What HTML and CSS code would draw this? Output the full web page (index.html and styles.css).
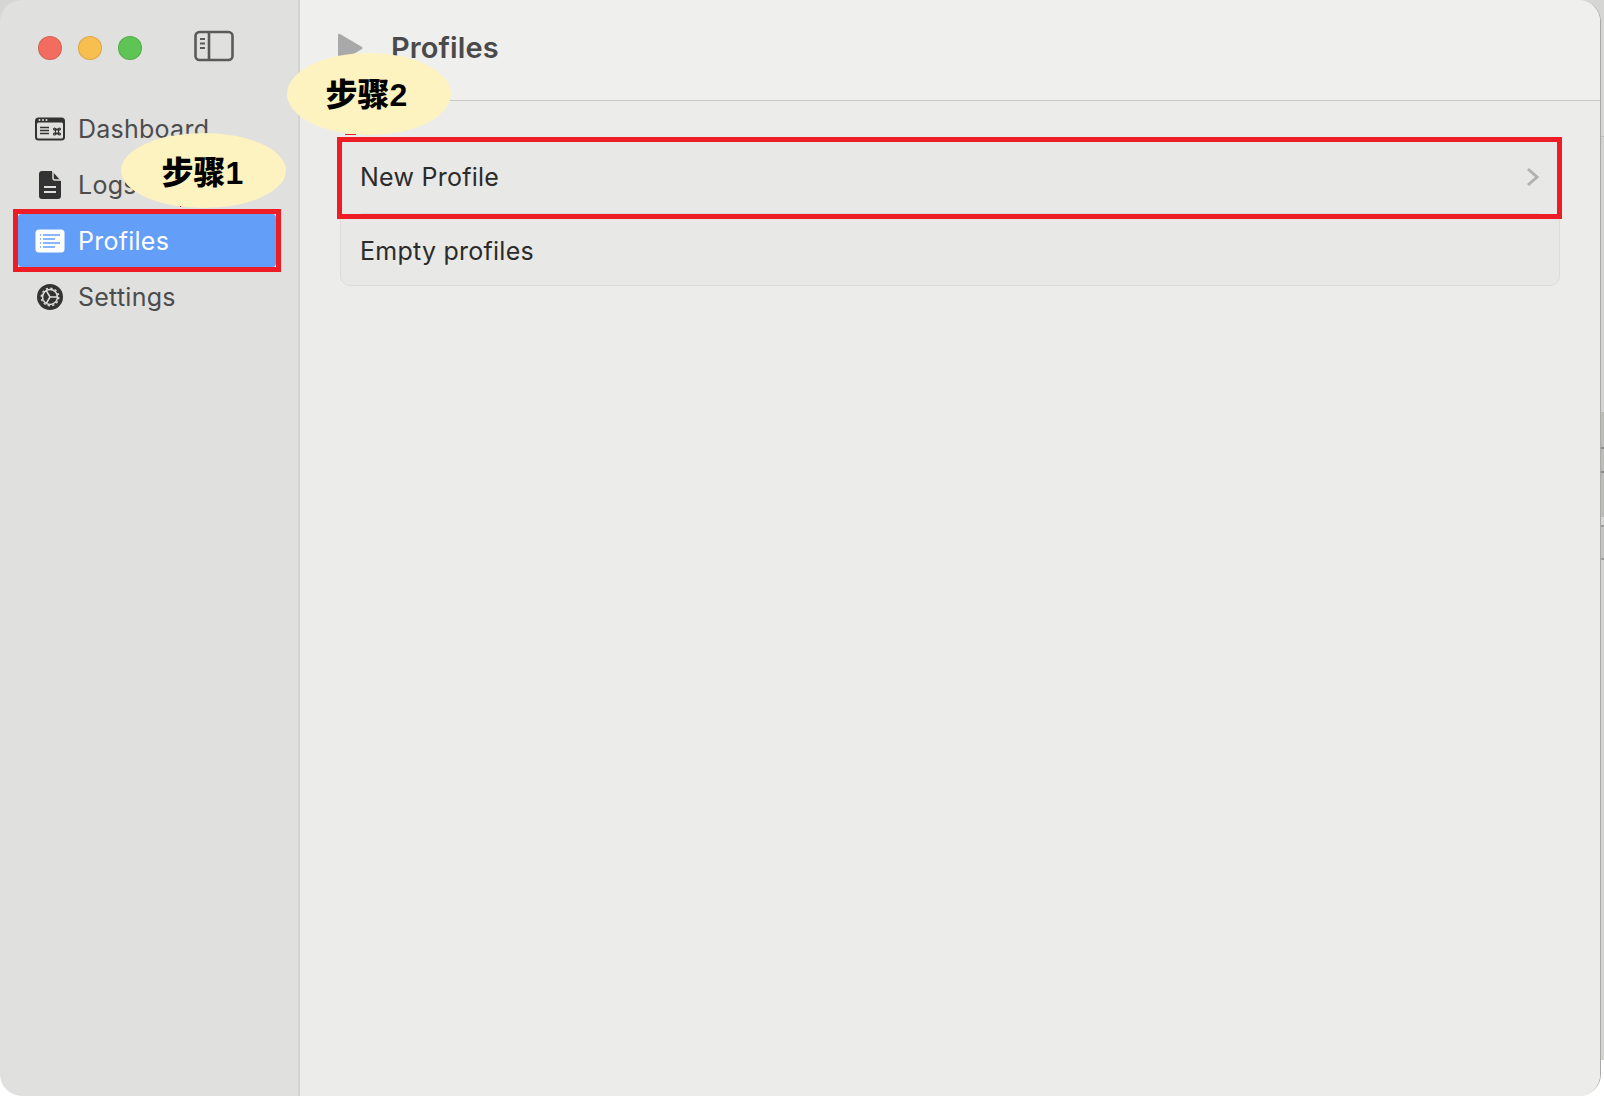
FILE: index.html
```html
<!DOCTYPE html>
<html lang="en">
<head>
    <meta charset="UTF-8">
    <meta name="viewport" content="width=device-width, initial-scale=1.0">
    <title>Profiles</title>
    <link rel="stylesheet" href="styles.css">
</head>
<body>
    <div class="window">
        <aside class="sidebar">
            <div class="titlebar">
                <div class="lights">
                    <span class="light red"></span>
                    <span class="light yellow"></span>
                    <span class="light green"></span>
                </div>
                <svg class="toggle" width="40" height="32" viewBox="0 0 40 32" fill="none" stroke="#5a5a5a">
                    <rect x="1.500" y="2" width="37" height="28" rx="4" stroke-width="2.600"/>
                    <path d="M15 2v28" stroke-width="2.600"/>
                    <path d="M6 9h5M6 13.500h5M6 18h5" stroke-width="2"/>
                </svg>
            </div>
            <nav class="nav">
                <a class="nav-item">
                    <svg width="30" height="24" viewBox="0 0 30 24">
                        <rect x="0" y="0.500" width="30" height="23" rx="3.500" fill="#333"/>
                        <rect x="2" y="5.500" width="26" height="16" rx="1.500" fill="#e0e0de"/>
                        <circle cx="4.500" cy="3" r="1" fill="#e0e0de"/>
                        <circle cx="8" cy="3" r="1" fill="#e0e0de"/>
                        <circle cx="11.500" cy="3" r="1" fill="#e0e0de"/>
                        <path d="M5 10.500h9M5 13.500h9M5 16.500h9" stroke="#333" stroke-width="1.500"/>
                        <g fill="none" stroke="#333" stroke-width="1.100">
                            <path d="M20.500 12h3v5h-3zM19.500 13h5M19.500 16h5"/>
                            <circle cx="19.500" cy="12" r="1"/>
                            <circle cx="24.500" cy="12" r="1"/>
                            <circle cx="19.500" cy="17" r="1"/>
                            <circle cx="24.500" cy="17" r="1"/>
                        </g>
                    </svg>
                    Dashboard
                </a>
                <a class="nav-item">
                    <svg width="30" height="30" viewBox="0 0 30 30">
                        <path d="M7 1h10l9 10v15a3 3 0 0 1-3 3H7a3 3 0 0 1-3-3V4a3 3 0 0 1 3-3z" fill="#333"/>
                        <path d="M18 1v7a2 2 0 0 0 2 2h6" fill="none" stroke="#e0e0de" stroke-width="1.500"/>
                        <path d="M9 17h12M9 22h12" stroke="#e0e0de" stroke-width="2"/>
                    </svg>
                    Logs
                </a>
                <a class="nav-item active">
                    <svg width="30" height="24" viewBox="0 0 30 24">
                        <rect x="0.500" y="0.500" width="29" height="23" rx="3.500" fill="#fff"/>
                        <path d="M8 6h17M8 10h12M8 14h17M8 18h12" stroke="#639ef8" stroke-width="1.500"/>
                        <path d="M5 6h1M5 10h1M5 14h1M5 18h1" stroke="#639ef8" stroke-width="1.700"/>
                    </svg>
                    Profiles
                </a>
                <a class="nav-item">
                    <svg width="30" height="30" viewBox="0 0 30 30">
                        <circle cx="15" cy="15" r="13" fill="#333"/>
                        <circle cx="15" cy="15" r="7.500" fill="none" stroke="#e0e0de" stroke-width="1.500"/>
                        <circle cx="15" cy="15" r="8.800" fill="none" stroke="#e0e0de" stroke-width="1.300" stroke-dasharray="2.300 2.310"/>
                        <path d="M15 15l-3.700-6.300M15 15l-3.700 6.300M15 15h7.500" stroke="#e0e0de" stroke-width="1.500"/>
                    </svg>
                    Settings
                </a>
            </nav>
        </aside>
        <main class="main">
            <header class="header">
                <svg width="28" height="30" viewBox="0 0 28 28" preserveAspectRatio="none">
                    <path d="M2 2q0-2 2-1l22 12q1 1 0 2L4 27q-2 1-2-1z" fill="#a9a9a9"/>
                </svg>
                <h1>Profiles</h1>
            </header>
            <section class="card">
                <div class="row first">
                    New Profile
                    <svg width="14" height="20" viewBox="0 0 14 20" fill="none" stroke="#b1b1b0" stroke-width="3">
                        <path d="M2 2l9 8-9 8"/>
                    </svg>
                </div>
                <div class="sep"></div>
                <div class="row">Empty profiles</div>
            </section>
        </main>
    </div>

    <!-- annotations pasted on top of the screenshot -->
    <div class="mark mark-nav"></div>
    <div class="mark mark-row"></div>
    <div class="bubble bubble-one">步骤1</div>
    <div class="bubble bubble-two">步骤2</div>
    <span class="tick tick-row"></span>
    <span class="tick tick-nav"></span>
</body>
</html>
```
FILE: styles.css
```css
* { box-sizing: border-box; }
html, body { height: 100%; }
body {
    margin: 0;
    overflow: hidden;
    position: relative;
    font-family: Inter, "Noto Sans", sans-serif;
    /* bit of the window behind, only shows in the right strip */
    background: linear-gradient(
        #d6d6d4 0 136px, #bdbdbb 136px 137px, #d2d2d0 137px 412px,
        #bcbcb8 412px 447px, #8c8c8a 447px 449px, #bcbcb8 449px 471px,
        #8c8c8a 471px 473px, #bcbcb8 473px 517px, #d6d6d4 517px 525px,
        #9c9c9a 525px 527px, #c4c4c2 527px 558px, #9c9c9a 558px 560px,
        #d2d2d0 560px 1060px, #fff 1060px);
}

.window {
    width: 1601px;
    height: 1096px;
    display: flex;
    border-radius: 22px;
    border-right: 1px solid #a9a9a8;
    overflow: hidden;
}

.sidebar {
    width: 300px;
    flex: none;
    background: #e0e0de;
    border-right: 2px solid #d3d3d1;
}
.titlebar {
    height: 102px;
    padding: 30px 0 0 38px;
    display: flex;
    align-items: flex-start;
}
.lights { display: flex; gap: 16px; padding-top: 6px; }
.light { width: 24px; height: 24px; border-radius: 50%; border: 1px solid rgba(0,0,0,.12); }
.red { background: #f26d60; }
.yellow { background: #f7bf4f; }
.green { background: #5ec454; }
.toggle { margin-left: 52px; }

.nav { padding: 0 22px 0 18px; display: flex; flex-direction: column; gap: 3px; }
.nav-item {
    height: 53px;
    padding-left: 17px;
    display: flex;
    align-items: center;
    gap: 13px;
    font-size: 25px;
    letter-spacing: .25px;
    color: #4c4c4c;
    border-radius: 4px;
}
.nav-item svg { flex: none; }
.nav-item.active { background: #639ef8; color: #fff; }

.main { flex: 1; background: #ecECea; }
.header {
    height: 101px;
    padding: 0 0 5px 36px;
    display: flex;
    align-items: center;
    gap: 27px;
    background: #efefed;
    border-bottom: 1px solid #c8c8c6;
}
.header h1 { margin: 0; font-size: 29px; font-weight: 600; letter-spacing: .1px; color: #4a4a4a; }

.card {
    margin: 37px 40px 0 40px;
    height: 148px;
    background: #e8e8e6;
    border: 1px solid #dcdcda;
    border-radius: 10px;
}
.row {
    height: 73px;
    padding: 0 19px;
    display: flex;
    align-items: center;
    justify-content: space-between;
    font-size: 25px;
    letter-spacing: .25px;
    color: #2b2b2b;
}
.row.first { height: 74px; padding-top: 2px; }
.sep { height: 1px; margin: 0 20px; background: #dadad8; }

.mark { position: absolute; border: 5px solid #ee1c25; }
.mark-nav { left: 13px; top: 209px; width: 268px; height: 63px; }
.mark-row { left: 337px; top: 137px; width: 1225px; height: 82px; }

.bubble {
    position: absolute;
    display: flex;
    align-items: center;
    justify-content: center;
    border-radius: 50%;
    background: #fdf3c0;
    color: #000;
    font-family: "Liberation Sans", "Noto Sans CJK SC", sans-serif;
    font-size: 32px;
    font-weight: 900;
}
.bubble-one { left: 121px; top: 133px; width: 165px; height: 75px; padding: 0 2px 2px 0; }
.bubble-two { left: 287px; top: 53px; width: 164px; height: 82px; padding: 0 5px 4px 0; }

.tick { position: absolute; height: 1px; background: #ee1c25; }
.tick-row { left: 345px; top: 134px; width: 11px; }
.tick-nav { left: 180px; top: 206px; width: 1px; }
```
